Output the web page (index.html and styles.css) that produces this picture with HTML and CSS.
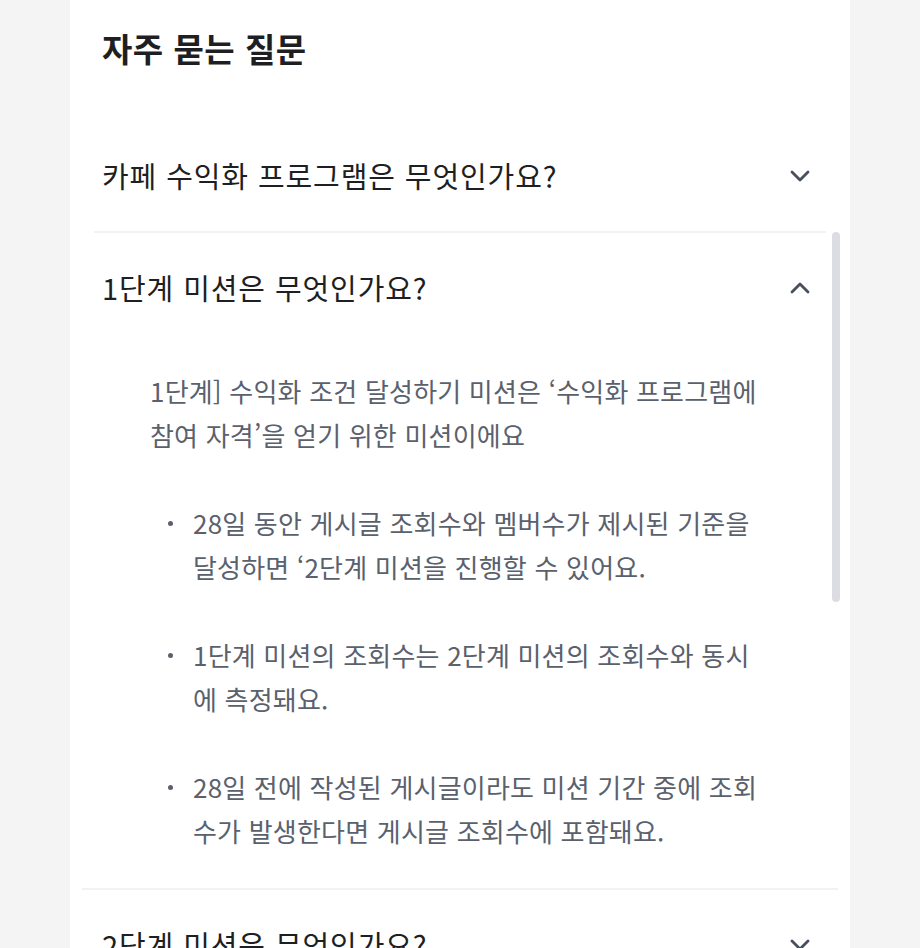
FILE: index.html
```html
<!DOCTYPE html>
<html lang="ko">
  <head>
    <meta charset="UTF-8" />
    <meta name="viewport" content="width=device-width, initial-scale=1.0" />
    <title>자주 묻는 질문</title>
    <link rel="stylesheet" href="styles.css">
  </head>
  <body>
    <div class="panel">
      <h1>자주 묻는 질문</h1>

      <div class="faq-list">
        <!-- closed -->
        <div class="faq-item">
          <div class="faq-question">
            <span>카페 수익화 프로그램은 무엇인가요?</span>
            <svg class="chevron" viewBox="0 0 20 12" width="20" height="12">
              <path d="M2 2 L10 10 L18 2" />
            </svg>
          </div>
        </div>

        <!-- open -->
        <div class="faq-item open">
          <div class="scroll-thumb"></div>
          <div class="faq-question">
            <span>1단계 미션은 무엇인가요?</span>
            <svg class="chevron" viewBox="0 0 20 12" width="20" height="12">
              <path d="M2 10 L10 2 L18 10" />
            </svg>
          </div>
          <div class="faq-answer">
            <p>1단계] 수익화 조건 달성하기 미션은 ‘수익화 프로그램에 참여 자격’을 얻기 위한 미션이에요</p>
            <ul>
              <li>28일 동안 게시글 조회수와 멤버수가 제시된 기준을 달성하면 ‘2단계 미션을 진행할 수 있어요.</li>
              <li>1단계 미션의 조회수는 2단계 미션의 조회수와 동시에 측정돼요.</li>
              <li>28일 전에 작성된 게시글이라도 미션 기간 중에 조회수가 발생한다면 게시글 조회수에 포함돼요.</li>
            </ul>
          </div>
        </div>

        <div class="faq-item">
          <div class="faq-question">
            <span>2단계 미션은 무엇인가요?</span>
            <svg class="chevron" viewBox="0 0 20 12" width="20" height="12">
              <path d="M2 2 L10 10 L18 2" />
            </svg>
          </div>
        </div>
      </div>
    </div>
  </body>
</html>
```

FILE: styles.css
```css
body {
  margin: 0;
  background-color: #f4f4f5;
  font-family: "Noto Sans CJK KR", "Noto Sans", sans-serif;
  color: #1e1f22;
}
.panel {
  width: 780px;
  height: 948px;
  overflow: hidden;
  margin: 0 auto;
  background-color: #fff;
  box-sizing: border-box;
  padding-top: 26px;
}
h1 {
  margin: 0 0 51px 32px;
  font-size: 33px;
  line-height: 44px;
  font-weight: 700;
  letter-spacing: 0.5px;
}
.faq-item {
  margin: 0 24px;
  padding: 0 8px;
  border-bottom: 2px solid #f2f2f3;
}
.faq-item.open {
  position: relative;
  margin: 0 12px;
  padding: 0 20px;
}
.faq-question {
  height: 110px;
  display: flex;
  align-items: center;
  justify-content: space-between;
  font-size: 29px;
  letter-spacing: 0.9px;
}
.faq-question span {
  margin-top: -3px;
}
.chevron {
  margin-right: 8px;
  fill: none;
  stroke: #474e5c;
  stroke-width: 2.8;
  stroke-linecap: round;
  stroke-linejoin: round;
}
.faq-answer {
  padding: 26px 48px 35px 48px;
  font-size: 26px;
  line-height: 44px;
  color: #5a616d;
  word-break: break-all;
  letter-spacing: 0.2px;
}
.faq-answer p {
  margin: 0 0 44px;
}
.faq-answer ul {
  margin: 0;
  padding: 0;
  list-style: none;
}
.faq-answer li {
  display: grid;
  grid-template-columns: 43px 1fr;
  margin-bottom: 44px;
}
.faq-answer li:last-child {
  margin-bottom: 0;
}
.faq-answer li::before {
  content: "";
  width: 5px;
  height: 5px;
  margin: 20px 0 0 18px;
  border-radius: 50%;
  background-color: #5a616d;
}
.scroll-thumb {
  position: absolute;
  top: -1px;
  right: -2px;
  width: 8px;
  height: 370px;
  border-radius: 4px;
  background-color: #dcdde2;
}
```
